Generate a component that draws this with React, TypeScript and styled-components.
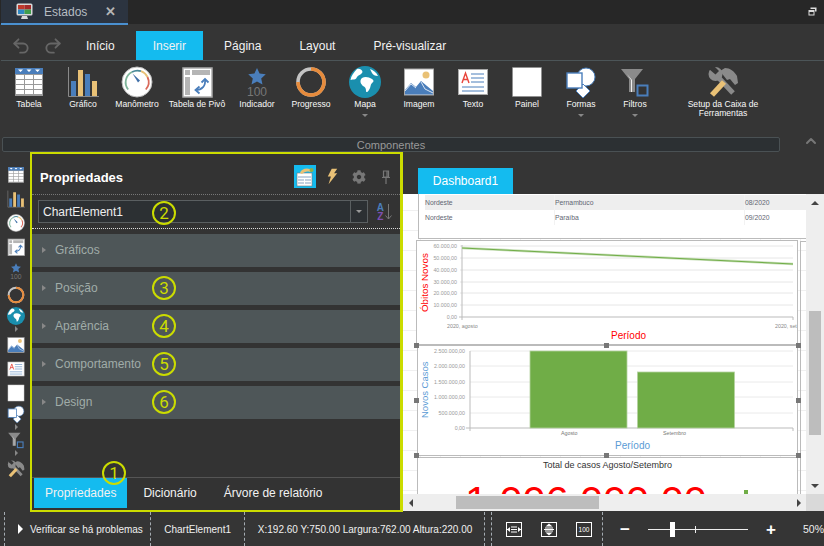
import React from 'react';
import styled, { createGlobalStyle } from 'styled-components';
import { ChevronUp, Redo2, Undo2 } from 'lucide-react';
import { FaCog } from 'react-icons/fa';

const GlobalStyle = createGlobalStyle`
  html, body {
    margin: 0;
    padding: 0;
    background: #353535;
    font-family: 'Liberation Sans', Arial, sans-serif;
  }
  * {
    box-sizing: border-box;
  }
`;

const BLUE = '#4a7ebb';
const CYAN = '#14bbef';
const YELLOW = '#cbdc00';
const SAND = '#e9c176';

const Shell = styled.div`
  width: 824px;
  height: 546px;
  overflow: hidden;
  display: flex;
  flex-direction: column;
  background: #353535;
`;

/* title bar */
const TitleBar = styled.div`
  height: 24px;
  flex: none;
  display: flex;
  align-items: flex-start;
  justify-content: space-between;
  background: #272727;
  padding-left: 1px;
  position: relative;
  z-index: 1;
`;

const DocTab = styled.div`
  width: 127px;
  height: 25px;
  display: flex;
  align-items: center;
  padding-left: 15px;
  background: #2c3440;
  border-bottom: 2px solid #4a90d0;
  color: #b6bcc2;
  font-size: 12px;
`;

const DocTabName = styled.span`
  margin-left: 11px;
  width: 61px;
`;

const DocClose = styled.span`
  color: #b5b5b5;
  font-size: 13px;
  font-weight: bold;
`;

const RestoreButton = styled.div`
  padding: 7px 7px 0 0;
  line-height: 0;
`;

/* menu */
const MenuBar = styled.div`
  height: 37px;
  flex: none;
  display: flex;
  align-items: flex-end;
  border-bottom: 1px solid #4c5558;
  margin: 0 0 0 1px;
  padding-left: 10px;
`;

const HistoryButtons = styled.div`
  width: 58px;
  height: 29px;
  display: flex;
  align-items: center;
  gap: 12px;
  color: #666;
`;

const MenuTabs = styled.div`
  display: flex;
  gap: 4px;
`;

const MenuTab = styled.div<{ $active?: boolean }>`
  height: 29px;
  padding: 0 17px;
  display: flex;
  align-items: center;
  font-size: 12px;
  color: #f2f2f2;
  background: ${(p) => (p.$active ? CYAN : 'transparent')};
`;

/* ribbon */
const Ribbon = styled.div`
  height: 75px;
  flex: none;
  display: flex;
  padding: 5px 0 0 2px;
`;

const RibbonItem = styled.div<{ $w?: number; $ml?: number }>`
  width: ${(p) => p.$w ?? 54}px;
  margin-left: ${(p) => p.$ml ?? 0}px;
  display: flex;
  flex-direction: column;
  align-items: center;
`;

const RibbonLabel = styled.div`
  margin-top: 2px;
  font-size: 8.6px;
  line-height: 9px;
  color: #f8f8f8;
  text-align: center;
  white-space: nowrap;
`;

const DownCaret = styled.div`
  margin-top: 5px;
  border-left: 3px solid transparent;
  border-right: 3px solid transparent;
  border-top: 3px solid #888;
`;

const GroupRow = styled.div`
  height: 16px;
  flex: none;
  display: flex;
  align-items: flex-start;
  padding-left: 2px;
`;

const GroupBar = styled.div`
  width: 778px;
  height: 15px;
  margin-top: 1px;
  background: #2c3033;
  border: 1px solid #4a5154;
  border-radius: 2px;
  color: #999;
  font-size: 11px;
  line-height: 14px;
  text-align: center;
`;

const GroupCollapse = styled.div`
  margin: -3px 0 0 23px;
  color: #777;
  line-height: 0;
`;

/* main */
const Main = styled.div`
  flex: 1;
  min-height: 0;
  display: flex;
`;

const IconStrip = styled.div`
  width: 30px;
  flex: none;
  display: flex;
  flex-direction: column;
  align-items: center;
  padding: 11px 0 0 2px;
`;

const StripItem = styled.div<{ $h?: number }>`
  height: ${(p) => p.$h ?? 24}px;
  display: flex;
  align-items: center;
  justify-content: center;
`;

const SideCaret = styled.div`
  height: 8px;
  margin: 0 0 0 1px;
  display: flex;
  align-items: center;
  &::before {
    content: '';
    border-top: 3px solid transparent;
    border-bottom: 3px solid transparent;
    border-left: 3px solid #888;
  }
`;

const PropertiesFrame = styled.div`
  width: 373px;
  flex: none;
  display: flex;
  flex-direction: column;
  background: #333;
  border: solid ${YELLOW};
  border-width: 2px 3px 2px 2px;
`;

const PanelHeader = styled.div`
  height: 41px;
  flex: none;
  display: flex;
  align-items: center;
  padding: 0 3px 0 8px;
  border-bottom: 1px dotted #777;
`;

const PanelTitle = styled.div`
  flex: 1;
  margin-top: 7px;
  color: #fff;
  font-size: 13px;
  font-weight: bold;
`;

const HeaderTool = styled.div<{ $active?: boolean }>`
  width: 22px;
  height: 23px;
  margin: 5px 0 0 5px;
  display: flex;
  align-items: center;
  justify-content: center;
  background: ${(p) => (p.$active ? CYAN : 'transparent')};
  color: #777;
`;

const ComboRow = styled.div`
  height: 34px;
  flex: none;
  display: flex;
  align-items: center;
  padding: 0 8px 0 6px;
  border-bottom: 1px dotted #ddd;
  position: relative;
`;

const Combo = styled.div`
  width: 331px;
  height: 23px;
  display: flex;
  background: #2c3033;
  border: 1px solid #5a5f61;
`;

const ComboText = styled.div`
  flex: 1;
  padding-left: 4px;
  color: #eee;
  font-size: 12px;
  line-height: 23px;
`;

const ComboButton = styled.div`
  width: 17px;
  display: flex;
  align-items: center;
  justify-content: center;
  border-left: 1px solid #5a5f61;
  &::before {
    content: '';
    border-left: 3px solid transparent;
    border-right: 3px solid transparent;
    border-top: 3px solid #999;
  }
`;

const SortButton = styled.div`
  margin-left: 9px;
  display: flex;
  align-items: center;
  gap: 1px;
`;

const SortLetters = styled.div`
  display: flex;
  flex-direction: column;
  font-size: 10px;
  font-weight: bold;
  line-height: 9px;
  text-align: center;
`;

const SortLetter = styled.span<{ $color: string }>`
  color: ${(p) => p.$color};
`;

const Sections = styled.div`
  flex: 1;
  display: flex;
  flex-direction: column;
  gap: 5px;
  padding-top: 5px;
`;

const Section = styled.div`
  height: 33px;
  display: flex;
  align-items: center;
  gap: 9px;
  padding: 0 0 2px 10px;
  background: #4e5658;
  color: #a0aca8;
  font-size: 12px;
  position: relative;
  &::before {
    content: '';
    border-top: 3.5px solid transparent;
    border-bottom: 3.5px solid transparent;
    border-left: 4px solid #888;
  }
`;

const Badge = styled.div<{ $left: number; $top: number }>`
  position: absolute;
  left: ${(p) => p.$left}px;
  top: ${(p) => p.$top}px;
  z-index: 2;
  width: 24px;
  height: 24px;
  display: flex;
  align-items: center;
  justify-content: center;
  border: 2px solid ${YELLOW};
  border-radius: 50%;
  color: ${YELLOW};
  font-family: Roboto, 'Liberation Sans', sans-serif;
  font-size: 17px;
  font-weight: 400;
`;

const PanelTabs = styled.div`
  height: 33px;
  flex: none;
  display: flex;
  gap: 5px;
  padding-left: 2px;
  border-top: 1px solid #555;
  position: relative;
`;

const PanelTab = styled.div<{ $active?: boolean }>`
  height: 30px;
  padding: 0 11px;
  display: flex;
  align-items: center;
  background: ${(p) => (p.$active ? CYAN : 'transparent')};
  color: #f2f2f2;
  font-size: 12px;
`;

/* designer */
const Designer = styled.div`
  flex: 1;
  min-width: 0;
  display: flex;
  flex-direction: column;
  padding-bottom: 1px;
`;

const PageTabs = styled.div`
  height: 42px;
  flex: none;
  display: flex;
  align-items: flex-end;
  padding-left: 15px;
`;

const PageTab = styled.div`
  width: 95px;
  height: 26px;
  background: ${CYAN};
  color: #fff;
  font-size: 12px;
  line-height: 26px;
  text-align: center;
`;

const DesignBody = styled.div`
  flex: 1;
  min-height: 0;
  display: flex;
`;

const Canvas = styled.div`
  flex: 1;
  position: relative;
  overflow: hidden;
  background-color: #fff;
  background-image: linear-gradient(#f0f0f0 1px, transparent 1px),
    linear-gradient(90deg, #f0f0f0 1px, transparent 1px);
  background-size: 20px 20px;
  background-position: -3px -4px;
`;

const Element = styled.div<{ $x: number; $y: number; $w: number; $h: number }>`
  position: absolute;
  left: ${(p) => p.$x}px;
  top: ${(p) => p.$y}px;
  width: ${(p) => p.$w}px;
  height: ${(p) => p.$h}px;
  border: 1px solid #bbb;
  background: #fff;
`;

const Backdrop = styled(Element)`
  background: transparent;
`;

const GridRow = styled.div<{ $shade?: boolean }>`
  display: grid;
  grid-template-columns: 130px 190px 1fr;
  height: 14.5px;
  margin-left: 6px;
  background: ${(p) => (p.$shade ? '#eee' : 'transparent')};
  color: #5f6672;
  font-size: 6.8px;
  line-height: 15px;
`;

const GridCell = styled.div`
  border-right: 1px solid #f2f2f2;
`;

const RowsTop = styled.div`
  height: 10px;
`;

const Handle = styled.div<{ $x: number; $y: number }>`
  position: absolute;
  left: ${(p) => p.$x}px;
  top: ${(p) => p.$y}px;
  width: 5px;
  height: 5px;
  background: #777;
`;

const TotalTitle = styled.div`
  height: 14px;
  color: #333;
  font-size: 9px;
  line-height: 14px;
  text-align: center;
`;

const TotalValue = styled.div`
  margin: 9px 0 0 47px;
  color: #f00;
  font-size: 41.4px;
  line-height: 41px;
  white-space: nowrap;
`;

const TotalMark = styled.div`
  position: absolute;
  left: 326px;
  top: 32px;
  width: 4px;
  height: 10px;
  background: #70ad47;
`;

const VScroll = styled.div`
  width: 18px;
  flex: none;
  display: flex;
  flex-direction: column;
  align-items: center;
  background: #eee;
  padding: 7px 0 6px;
`;

const ArrowV = styled.div<{ $up?: boolean }>`
  border-left: 4px solid transparent;
  border-right: 4px solid transparent;
  ${(p) => (p.$up ? 'border-bottom: 4px solid #444;' : 'border-top: 4px solid #444;')}
`;

const VThumb = styled.div`
  width: 12px;
  height: 124px;
  margin: 106px 0 auto 0;
  background: #bdbdbd;
`;

const HScroll = styled.div`
  height: 17px;
  flex: none;
  display: flex;
  align-items: center;
  background: #eee;
  position: relative;
`;

const ArrowH = styled.div<{ $left?: boolean }>`
  border-top: 4px solid transparent;
  border-bottom: 4px solid transparent;
  ${(p) => (p.$left ? 'border-right: 4px solid #444;' : 'border-left: 4px solid #444;')}
`;

const HThumb = styled.div`
  width: 143px;
  height: 13px;
  margin: 0 198px 0 49px;
  background: #bdbdbd;
`;

const ScrollCorner = styled.div`
  width: 18px;
  height: 17px;
  margin-left: auto;
  background: #d9d9d9;
`;

const LeftEdge = styled.div`
  width: 10px;
  display: flex;
  justify-content: flex-end;
  margin-right: -6px;
`;

const RightArrowSlot = styled.div`
  width: 4px;
`;

/* status bar */
const StatusBar = styled.div`
  height: 34px;
  flex: none;
  display: flex;
  padding-left: 4px;
  color: #f0f0f0;
  font-size: 10px;
`;

const StatusCell = styled.div<{ $w: number; $pl?: number }>`
  width: ${(p) => p.$w}px;
  padding-left: ${(p) => p.$pl ?? 0}px;
  display: flex;
  align-items: center;
  border-left: 1px dashed #a5acb2;
  white-space: nowrap;
`;

const PlayMark = styled.span`
  margin-right: 7px;
  border-top: 5px solid transparent;
  border-bottom: 5px solid transparent;
  border-left: 5px solid #fff;
`;

const FitIcons = styled.div`
  display: flex;
  gap: 19px;
`;

const ZoomArea = styled.div`
  flex: 1;
  display: flex;
  align-items: center;
  border-left: 1px dashed #a5acb2;
  padding-left: 17px;
`;

const ZoomSign = styled.span`
  width: 10px;
  color: #fff;
  font-size: 17px;
  font-weight: bold;
  line-height: 17px;
  text-align: center;
`;

const ZoomTrack = styled.div`
  width: 100px;
  height: 1px;
  margin: 0 18px;
  background: #eee;
  position: relative;
`;

const ZoomThumb = styled.div`
  position: absolute;
  left: 22px;
  top: -7px;
  width: 5px;
  height: 15px;
  background: #fff;
`;

const ZoomTick = styled.div`
  position: absolute;
  left: 47px;
  top: -3px;
  width: 1px;
  height: 7px;
  background: #eee;
`;

const ZoomValue = styled.span`
  margin-left: 27px;
  font-size: 10.5px;
`;

/* drawings */
type IconProps = { size?: number };

const TableIcon = ({ size = 32 }: IconProps) => (
  <svg width={size} height={size} viewBox="0 0 32 32">
    <rect x="2" y="2" width="28" height="28" fill="#9a9a9a" />
    <rect x="2" y="2" width="28" height="6" fill={BLUE} />
    <path d="M5 3.500h5l-2.500 2.500zM13.500 3.500h5L16 6zM22 3.500h5l-2.500 2.500z" fill="#fff" />
    {[9, 14, 19, 24].map((y) =>
      [3, 12, 21].map((x) => <rect key={`${x}-${y}`} x={x} y={y} width="8" height="4" fill="#fff" />)
    )}
  </svg>
);

const ChartIcon = ({ size = 32 }: IconProps) => (
  <svg width={size} height={size} viewBox="0 0 32 32">
    <path d="M1.500 1v29.500H32" fill="none" stroke="#8a8a8a" strokeWidth="1" />
    <rect x="4" y="15" width="5" height="15" fill={BLUE} />
    <rect x="11" y="4" width="5" height="26" fill={SAND} />
    <rect x="18" y="8" width="5" height="22" fill={BLUE} />
    <rect x="25" y="15" width="5" height="15" fill={SAND} />
  </svg>
);

const GaugeIcon = ({ size = 32 }: IconProps) => (
  <svg width={size} height={size} viewBox="0 0 32 32">
    <circle cx="16" cy="16" r="15" fill="#fff" />
    <circle cx="16" cy="16" r="15" fill="none" stroke="#bbb" strokeWidth="1" />
    <path d="M7.200 23.500A11.500 11.500 0 0 1 11 6" fill="none" stroke="#7fb59b" strokeWidth="1.800" />
    <path d="M11 6A11.500 11.500 0 0 1 20 5.200" fill="none" stroke="#4a8a98" strokeWidth="1.800" />
    <path d="M20 5.200A11.500 11.500 0 0 1 26.500 11" fill="none" stroke={SAND} strokeWidth="1.800" />
    <path d="M26.500 11A11.500 11.500 0 0 1 24.800 23.500" fill="none" stroke="#d9695a" strokeWidth="1.800" />
    <path d="M11.500 7.500L19 14.500 17 16.500z" fill="#3f6fa8" />
  </svg>
);

const PivotIcon = ({ size = 32 }: IconProps) => (
  <svg width={size} height={size} viewBox="0 0 32 32">
    <rect x="2" y="2" width="29" height="29" fill="#fff" stroke="#aaa" strokeWidth="1.500" />
    <rect x="4" y="4" width="5" height="5" fill="#b5b5b5" />
    <rect x="11" y="4" width="18" height="5" fill="#b5b5b5" />
    <rect x="4" y="11" width="5" height="18" fill="#b5b5b5" />
    <path d="M24 13c1 7-3 11-9.500 11" fill="none" stroke={BLUE} strokeWidth="1.800" />
    <path d="M20.500 16.500L24 13l3.500 3.500M18.500 20.500L14.500 24l4 3.500" fill="none" stroke={BLUE} strokeWidth="1.800" />
  </svg>
);

const IndicatorIcon = ({ size = 32 }: IconProps) => (
  <svg width={size} height={size} viewBox="0 0 32 32">
    <path d="M16 2l2.600 5.600 6.200.7-4.600 4.200 1.300 6.100-5.500-3.100-5.500 3.100 1.300-6.100-4.600-4.200 6.200-.7z" fill={BLUE} />
    <text x="16" y="30" textAnchor="middle" fontFamily="Liberation Sans" fontSize="12" fill="#777">
      100
    </text>
  </svg>
);

const ProgressIcon = ({ size = 32 }: IconProps) => (
  <svg width={size} height={size} viewBox="0 0 32 32">
    <circle cx="16" cy="16" r="13" fill="none" stroke="#c4c4c4" strokeWidth="3.600" />
    <path d="M16 3A13 13 0 1 1 3 16" fill="none" stroke="#e68b3c" strokeWidth="3.600" />
  </svg>
);

const MapIcon = ({ size = 32 }: IconProps) => (
  <svg width={size} height={size} viewBox="0 0 32 32">
    <circle cx="16" cy="16" r="16" fill="#1a8fae" />
    <path
      d="M8 3C5 6 2 10 1.500 14c3-1 5 0 6-2 1-3 5-3 6-6 0-2-3-4-5.500-3zM13 12c3-2 7-1 10 1 2 1 2 3 0 4-2 2-1 4-3 7-1 2-3 3-3 1 0-3-1-4-3-5-2-2-4-5-1-8z"
      fill="#fff"
    />
    <path d="M21 3c3 1 6 3 8 7-3 0-5-1-6-3z" fill="#fff" />
  </svg>
);

const ImageIcon = ({ size = 32 }: IconProps) => (
  <svg width={size} height={size} viewBox="0 0 32 32">
    <rect x="1.500" y="3" width="29" height="26" fill="#fff" stroke="#aaa" />
    <circle cx="23" cy="9" r="3.500" fill={SAND} />
    <path d="M2 24l6-7 5 4 5-6 12 10v3.500H2z" fill={BLUE} />
    <path d="M2 25l6-7 5 4M18 16l4 7 8 4" fill="none" stroke="#fff" strokeWidth=".8" />
  </svg>
);

const TextIcon = ({ size = 32 }: IconProps) => (
  <svg width={size} height={size} viewBox="0 0 32 32">
    <rect x="1.500" y="3.500" width="29" height="25" fill="#fff" stroke="#aaa" />
    <path d="M5 17L8.500 7 12 17M6.200 13.500h4.600" fill="none" stroke="#e8443a" strokeWidth="1.400" />
    <path d="M14 8h13M14 12h13M14 16h13M5 21h22M5 25h22" stroke={BLUE} strokeWidth="1" />
  </svg>
);

const PanelIcon = ({ size = 32 }: IconProps) => (
  <svg width={size} height={size} viewBox="0 0 32 32">
    <rect x="1.500" y="1.500" width="29" height="29" fill="#fff" stroke="#888" strokeDasharray="1 1" />
  </svg>
);

const ShapesIcon = ({ size = 32 }: IconProps) => (
  <svg width={size} height={size} viewBox="0 0 32 32">
    <circle cx="21" cy="11" r="9" fill="#fff" stroke={BLUE} />
    <path d="M18 18l7 7-7 7-7-7z" fill="#fff" stroke={BLUE} />
    <rect x="2" y="7" width="15" height="15" fill="#fff" stroke={BLUE} strokeWidth="1.400" />
  </svg>
);

const FilterIcon = ({ size = 32 }: IconProps) => (
  <svg width={size} height={size} viewBox="0 0 32 32">
    <path d="M2 3h22l-8 10v13H10V13z" fill="#8a8a8a" />
    <path d="M8 8l5 6v12h-1V14z" fill="#eee" />
    <rect x="18.500" y="19.500" width="10" height="10" fill="#333" stroke={BLUE} strokeWidth="2" />
  </svg>
);

const ToolsIcon = ({ size = 32 }: IconProps) => (
  <svg width={size} height={size} viewBox="0 0 32 32">
    <path d="M9 9l17 18" stroke="#8a8a8a" strokeWidth="5" />
    <circle cx="8.500" cy="8" r="7" fill="#8a8a8a" />
    <path d="M7 0l5 5-3.500 3.500-6-5L5 0z" fill="#353535" />
    <path d="M5 29L17 16" stroke={SAND} strokeWidth="5.500" />
    <path d="M13 5l5-3c5 0 9 3 12 8l1 7-3 2-5-6-3 1z" fill="#8a8a8a" />
  </svg>
);

const MonitorIcon = () => (
  <svg width="17" height="17" viewBox="0 0 17 17">
    <rect x="0.500" y="0.500" width="16" height="12" rx="1.500" fill="#d8d8d8" />
    <rect x="2" y="2" width="6.500" height="4.500" fill="#c0392b" />
    <rect x="8.500" y="2" width="6.500" height="4.500" fill="#a52a2a" />
    <rect x="2" y="6.500" width="6.500" height="4.500" fill="#2e86c1" />
    <rect x="8.500" y="6.500" width="6.500" height="4.500" fill="#3f9c4a" />
    <path d="M5 16h7l-1-3H6z" fill="#d8d8d8" />
  </svg>
);

const RestoreIcon = () => (
  <svg width="9" height="9" viewBox="0 0 9 9">
    <path d="M2.500 0.500h6v4H7V2H2.500z" fill="#ddd" />
    <rect x="0.500" y="3" width="6" height="5.500" fill="#ddd" />
    <rect x="1.500" y="5" width="4" height="2.500" fill="#272727" />
  </svg>
);

const SheetTool = () => (
  <svg width="20" height="20" viewBox="0 0 20 20">
    <rect x="2" y="6" width="15" height="13" fill="#fff" stroke="#777" strokeWidth=".6" />
    <path d="M3 10h13M3 13h6M10 13h6M3 16h6M10 16h6" stroke="#8aa4c2" strokeWidth="1.200" />
    <path d="M5 6C6 2 11 .5 15 2c1 1 1 3 0 3-3-1-6 0-8 2z" fill={SAND} />
    <circle cx="16.500" cy="3" r="2" fill="#8fb04a" />
  </svg>
);

const BoltTool = () => (
  <svg width="11" height="17" viewBox="0 0 14 20">
    <path d="M6 0h7L9 6h4L2 20l3-10H1z" fill={SAND} />
  </svg>
);

const PinTool = () => (
  <svg width="10" height="14" viewBox="0 0 10 14">
    <path d="M2.500 1h5v6h-5zM1 7.500h8M5 8v6M6 1v6" fill="none" stroke="#777" strokeWidth="1.200" />
  </svg>
);

const FitWidthIcon = () => (
  <svg width="16" height="15" viewBox="0 0 16 15">
    <rect x=".5" y=".5" width="15" height="14" fill="none" stroke="#fff" />
    <path d="M5 5h6M5 7.500h6M5 10h6M1 7.500h3M12 7.500h3" stroke="#fff" />
    <path d="M1 7.500l3-2.500v5zM15 7.500l-3-2.500v5z" fill="#fff" />
  </svg>
);

const FitHeightIcon = () => (
  <svg width="16" height="15" viewBox="0 0 16 15">
    <rect x=".5" y=".5" width="15" height="14" fill="none" stroke="#fff" />
    <path d="M4 6h8M3 7.500h10M4 9h8" stroke="#fff" />
    <path d="M8 1.500l3.500 3h-7zM8 13.500l3.500-3h-7z" fill="#fff" />
  </svg>
);

const FitFullIcon = () => (
  <svg width="16" height="15" viewBox="0 0 16 15">
    <rect x=".5" y=".5" width="15" height="14" fill="none" stroke="#fff" />
    <text x="8" y="10" textAnchor="middle" fontFamily="Liberation Sans" fontSize="6.500" fill="#fff">
      100
    </text>
  </svg>
);

const LineChart = () => {
  const grid = [
    ['60.000,00', 246],
    ['50.000,00', 258],
    ['40.000,00', 270],
    ['30.000,00', 282],
    ['20.000,00', 293],
    ['10.000,00', 305],
  ] as const;
  return (
    <svg width="380" height="103" viewBox="417 241 380 103" fontFamily="Liberation Sans">
      {grid.map(([label, y]) => (
        <g key={label}>
          <line x1="460" x2="793" y1={y} y2={y} stroke="#e6e6e6" />
          <text x="457" y={y + 2} textAnchor="end" fontSize="5.300" fill="#999">
            {label}
          </text>
        </g>
      ))}
      <text x="457" y="319" textAnchor="end" fontSize="5.300" fill="#999">
        0,00
      </text>
      <path d="M462 245v72h331v3M459 317h3M462 317v3" fill="none" stroke="#bbb" />
      <line x1="462" y1="248" x2="793" y2="264" stroke="#c9dfba" strokeWidth="2.500" />
      <line x1="462" y1="248" x2="793" y2="264" stroke="#70ad47" strokeWidth="1" />
      <text x="447" y="328" fontSize="5.300" fill="#888">
        2020, agosto
      </text>
      <text x="775" y="328" fontSize="5.300" fill="#888">
        2020, set
      </text>
      <text x="611" y="339" fontSize="10" fill="#f00">
        Período
      </text>
      <text transform="translate(428 312) rotate(-90)" fontSize="9.800" fill="#f00">
        Óbitos Novos
      </text>
    </svg>
  );
};

const BarChart = () => {
  const grid = [
    ['2.500.000,00', 351],
    ['2.000.000,00', 366],
    ['1.500.000,00', 382],
    ['1.000.000,00', 397],
    ['500.000,00', 413],
  ] as const;
  return (
    <svg width="379" height="109" viewBox="418 346 379 109" fontFamily="Liberation Sans">
      {grid.map(([label, y]) => (
        <g key={label}>
          <line x1="470" x2="793" y1={y} y2={y} stroke="#eaeaea" />
          <text x="465" y={y + 2} textAnchor="end" fontSize="5.300" fill="#999">
            {label}
          </text>
        </g>
      ))}
      <text x="465" y="430" textAnchor="end" fontSize="5.300" fill="#999">
        0,00
      </text>
      <path d="M470 351v77h323v3M466 428h4M470 428v3" fill="none" stroke="#bbb" />
      <rect x="530" y="351" width="97" height="77" fill="#70ad47" stroke="#b5d3a0" strokeWidth=".8" />
      <rect x="637.500" y="372" width="97" height="56" fill="#70ad47" stroke="#b5d3a0" strokeWidth=".8" />
      <text x="561" y="435" fontSize="5.300" fill="#777">
        Agosto
      </text>
      <text x="663" y="435" fontSize="5.300" fill="#777">
        Setembro
      </text>
      <text x="615" y="449" fontSize="10" fill="#5b9bd5">
        Período
      </text>
      <text transform="translate(428 418) rotate(-90)" fontSize="9.500" fill="#5b9bd5">
        Novos Casos
      </text>
    </svg>
  );
};

const RIBBON = [
  { label: 'Tabela', Icon: TableIcon },
  { label: 'Gráfico', Icon: ChartIcon },
  { label: 'Manômetro', Icon: GaugeIcon },
  { label: 'Tabela de Pivô', Icon: PivotIcon, w: 66 },
  { label: 'Indicador', Icon: IndicatorIcon },
  { label: 'Progresso', Icon: ProgressIcon },
  { label: 'Mapa', Icon: MapIcon, menu: true },
  { label: 'Imagem', Icon: ImageIcon },
  { label: 'Texto', Icon: TextIcon },
  { label: 'Painel', Icon: PanelIcon },
  { label: 'Formas', Icon: ShapesIcon, menu: true },
  { label: 'Filtros', Icon: FilterIcon, menu: true },
];

const SECTIONS: [string, string | null][] = [
  ['Gráficos', null],
  ['Posição', '3'],
  ['Aparência', '4'],
  ['Comportamento', '5'],
  ['Design', '6'],
];

const HANDLES: [number, number][] = [
  [11, 149],
  [201, 149],
  [393, 149],
  [11, 204],
  [393, 204],
  [11, 259],
  [201, 259],
  [393, 259],
];

export default function App() {
  return (
    <Shell>
      <GlobalStyle />
      <TitleBar>
        <DocTab>
          <MonitorIcon />
          <DocTabName>Estados</DocTabName>
          <DocClose>✕</DocClose>
        </DocTab>
        <RestoreButton>
          <RestoreIcon />
        </RestoreButton>
      </TitleBar>

      <MenuBar>
        <HistoryButtons>
          <Undo2 size={20} strokeWidth={2.2} />
          <Redo2 size={20} strokeWidth={2.2} />
        </HistoryButtons>
        <MenuTabs>
          <MenuTab>Início</MenuTab>
          <MenuTab $active>Inserir</MenuTab>
          <MenuTab>Página</MenuTab>
          <MenuTab>Layout</MenuTab>
          <MenuTab>Pré-visualizar</MenuTab>
        </MenuTabs>
      </MenuBar>

      <Ribbon>
        {RIBBON.map(({ label, Icon, w, menu }) => (
          <RibbonItem key={label} $w={w}>
            <Icon />
            <RibbonLabel>{label}</RibbonLabel>
            {menu && <DownCaret />}
          </RibbonItem>
        ))}
        <RibbonItem $w={102} $ml={10}>
          <ToolsIcon />
          <RibbonLabel>
            Setup da Caixa de
            <br />
            Ferramentas
          </RibbonLabel>
        </RibbonItem>
      </Ribbon>

      <GroupRow>
        <GroupBar>Componentes</GroupBar>
        <GroupCollapse>
          <ChevronUp size={16} strokeWidth={3} />
        </GroupCollapse>
      </GroupRow>

      <Main>
        <IconStrip>
          <StripItem><TableIcon size={18} /></StripItem>
          <StripItem><ChartIcon size={18} /></StripItem>
          <StripItem><GaugeIcon size={18} /></StripItem>
          <StripItem><PivotIcon size={18} /></StripItem>
          <StripItem><IndicatorIcon size={18} /></StripItem>
          <StripItem><ProgressIcon size={18} /></StripItem>
          <StripItem $h={18}><MapIcon size={18} /></StripItem>
          <SideCaret />
          <StripItem><ImageIcon size={18} /></StripItem>
          <StripItem><TextIcon size={18} /></StripItem>
          <StripItem><PanelIcon size={18} /></StripItem>
          <StripItem $h={18}><ShapesIcon size={18} /></StripItem>
          <SideCaret />
          <StripItem $h={18}><FilterIcon size={18} /></StripItem>
          <SideCaret />
          <StripItem><ToolsIcon size={18} /></StripItem>
        </IconStrip>

        <PropertiesFrame>
          <PanelHeader>
            <PanelTitle>Propriedades</PanelTitle>
            <HeaderTool $active>
              <SheetTool />
            </HeaderTool>
            <HeaderTool>
              <BoltTool />
            </HeaderTool>
            <HeaderTool>
              <FaCog size={14} />
            </HeaderTool>
            <HeaderTool>
              <PinTool />
            </HeaderTool>
          </PanelHeader>

          <ComboRow>
            <Combo>
              <ComboText>ChartElement1</ComboText>
              <ComboButton />
            </Combo>
            <SortButton>
              <SortLetters>
                <SortLetter $color={BLUE}>A</SortLetter>
                <SortLetter $color="#7d4fb0">Z</SortLetter>
              </SortLetters>
              <svg width="7" height="16" viewBox="0 0 7 16">
                <path d="M3.500 0v15M.5 11.500l3 3.500 3-3.500" fill="none" stroke="#777" />
              </svg>
            </SortButton>
            <Badge $left={120} $top={6}>2</Badge>
          </ComboRow>

          <Sections>
            {SECTIONS.map(([label, badge]) => (
              <Section key={label}>
                {label}
                {badge && <Badge $left={120} $top={4}>{badge}</Badge>}
              </Section>
            ))}
          </Sections>

          <PanelTabs>
            <PanelTab $active>Propriedades</PanelTab>
            <PanelTab>Dicionário</PanelTab>
            <PanelTab>Árvore de relatório</PanelTab>
            <Badge $left={70} $top={-17}>1</Badge>
          </PanelTabs>
        </PropertiesFrame>

        <Designer>
          <PageTabs>
            <PageTab>Dashboard1</PageTab>
          </PageTabs>
          <DesignBody>
            <Canvas>
              <Backdrop $x={397} $y={47} $w={30} $h={300} />
              <Element $x={15} $y={-10} $w={400} $h={55}>
                <RowsTop />
                <GridRow $shade>
                  <GridCell>Nordeste</GridCell>
                  <GridCell>Pernambuco</GridCell>
                  <GridCell>08/2020</GridCell>
                </GridRow>
                <GridRow>
                  <GridCell>Nordeste</GridCell>
                  <GridCell>Paraíba</GridCell>
                  <GridCell>09/2020</GridCell>
                </GridRow>
              </Element>
              <Element $x={13} $y={46} $w={382} $h={105}>
                <LineChart />
              </Element>
              <Element $x={14} $y={151} $w={381} $h={111}>
                <BarChart />
              </Element>
              <Element $x={14} $y={263} $w={381} $h={60}>
                <TotalTitle>Total de casos Agosto/Setembro</TotalTitle>
                <TotalValue>1.006.000,00</TotalValue>
                <TotalMark />
              </Element>
              {HANDLES.map(([x, y]) => (
                <Handle key={`${x}-${y}`} $x={x} $y={y} />
              ))}
            </Canvas>
            <VScroll>
              <ArrowV $up />
              <VThumb />
              <ArrowV />
            </VScroll>
          </DesignBody>
          <HScroll>
            <LeftEdge>
              <ArrowH $left />
            </LeftEdge>
            <HThumb />
            <RightArrowSlot>
              <ArrowH />
            </RightArrowSlot>
            <ScrollCorner />
          </HScroll>
        </Designer>
      </Main>

      <StatusBar>
        <StatusCell $w={147} $pl={13}>
          <PlayMark />
          Verificar se há problemas
        </StatusCell>
        <StatusCell $w={94} $pl={13}>ChartElement1</StatusCell>
        <StatusCell $w={241} $pl={13}>X:192.60 Y:750.00 Largura:762.00 Altura:220.00</StatusCell>
        <StatusCell $w={7} />
        <StatusCell $w={112} $pl={14}>
          <FitIcons>
            <FitWidthIcon />
            <FitHeightIcon />
            <FitFullIcon />
          </FitIcons>
        </StatusCell>
        <ZoomArea>
          <ZoomSign>−</ZoomSign>
          <ZoomTrack>
            <ZoomTick />
            <ZoomThumb />
          </ZoomTrack>
          <ZoomSign>+</ZoomSign>
          <ZoomValue>50%</ZoomValue>
        </ZoomArea>
      </StatusBar>
    </Shell>
  );
}
